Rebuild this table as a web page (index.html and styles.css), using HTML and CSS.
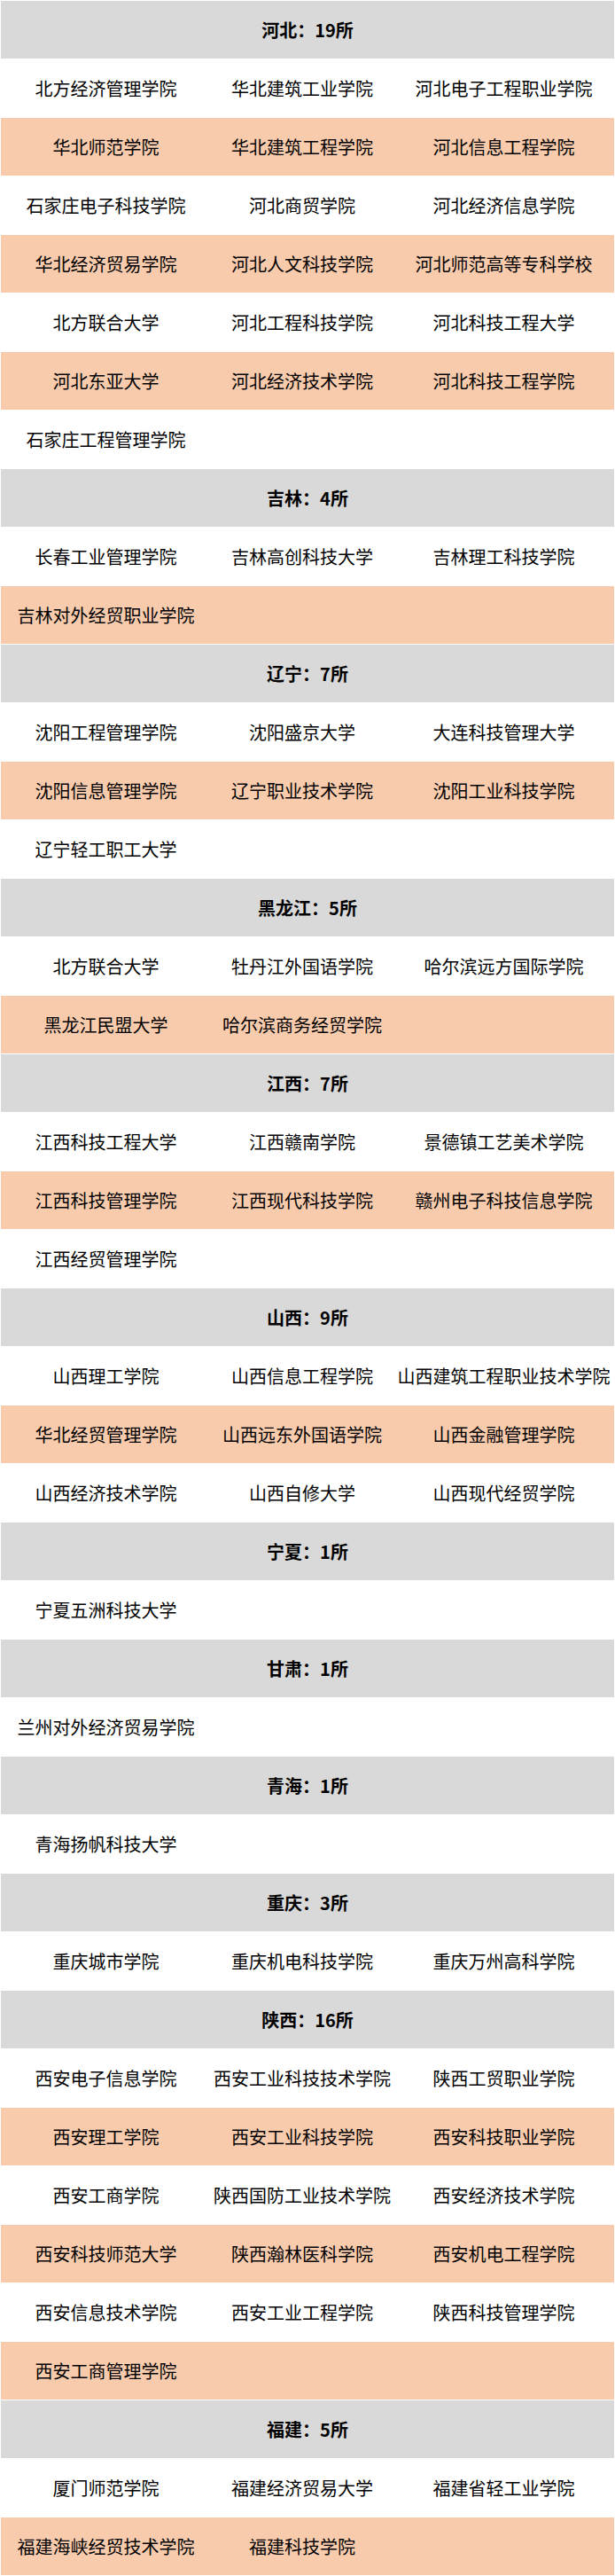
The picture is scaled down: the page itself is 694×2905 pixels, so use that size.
FILE: index.html
```html
<!DOCTYPE html>
<html lang="zh">
<head>
<meta charset="utf-8">
<title>院校名单</title>
<link rel="stylesheet" href="styles.css">
</head>
<body>
<div class="table">
  <div class="head">河北：19所</div>
  <div class="row"><div class="cell">北方经济管理学院</div><div class="cell">华北建筑工业学院</div><div class="cell">河北电子工程职业学院</div></div>
  <div class="row alt"><div class="cell">华北师范学院</div><div class="cell">华北建筑工程学院</div><div class="cell">河北信息工程学院</div></div>
  <div class="row"><div class="cell">石家庄电子科技学院</div><div class="cell">河北商贸学院</div><div class="cell">河北经济信息学院</div></div>
  <div class="row alt"><div class="cell">华北经济贸易学院</div><div class="cell">河北人文科技学院</div><div class="cell">河北师范高等专科学校</div></div>
  <div class="row"><div class="cell">北方联合大学</div><div class="cell">河北工程科技学院</div><div class="cell">河北科技工程大学</div></div>
  <div class="row alt"><div class="cell">河北东亚大学</div><div class="cell">河北经济技术学院</div><div class="cell">河北科技工程学院</div></div>
  <div class="row"><div class="cell">石家庄工程管理学院</div><div class="cell"></div><div class="cell"></div></div>

  <div class="head">吉林：4所</div>
  <div class="row"><div class="cell">长春工业管理学院</div><div class="cell">吉林高创科技大学</div><div class="cell">吉林理工科技学院</div></div>
  <div class="row alt"><div class="cell">吉林对外经贸职业学院</div><div class="cell"></div><div class="cell"></div></div>

  <div class="head">辽宁：7所</div>
  <div class="row"><div class="cell">沈阳工程管理学院</div><div class="cell">沈阳盛京大学</div><div class="cell">大连科技管理大学</div></div>
  <div class="row alt"><div class="cell">沈阳信息管理学院</div><div class="cell">辽宁职业技术学院</div><div class="cell">沈阳工业科技学院</div></div>
  <div class="row"><div class="cell">辽宁轻工职工大学</div><div class="cell"></div><div class="cell"></div></div>

  <div class="head">黑龙江：5所</div>
  <div class="row"><div class="cell">北方联合大学</div><div class="cell">牡丹江外国语学院</div><div class="cell">哈尔滨远方国际学院</div></div>
  <div class="row alt"><div class="cell">黑龙江民盟大学</div><div class="cell">哈尔滨商务经贸学院</div><div class="cell"></div></div>

  <div class="head">江西：7所</div>
  <div class="row"><div class="cell">江西科技工程大学</div><div class="cell">江西赣南学院</div><div class="cell">景德镇工艺美术学院</div></div>
  <div class="row alt"><div class="cell">江西科技管理学院</div><div class="cell">江西现代科技学院</div><div class="cell">赣州电子科技信息学院</div></div>
  <div class="row"><div class="cell">江西经贸管理学院</div><div class="cell"></div><div class="cell"></div></div>

  <div class="head">山西：9所</div>
  <div class="row"><div class="cell">山西理工学院</div><div class="cell">山西信息工程学院</div><div class="cell">山西建筑工程职业技术学院</div></div>
  <div class="row alt"><div class="cell">华北经贸管理学院</div><div class="cell">山西远东外国语学院</div><div class="cell">山西金融管理学院</div></div>
  <div class="row"><div class="cell">山西经济技术学院</div><div class="cell">山西自修大学</div><div class="cell">山西现代经贸学院</div></div>

  <div class="head">宁夏：1所</div>
  <div class="row"><div class="cell">宁夏五洲科技大学</div><div class="cell"></div><div class="cell"></div></div>

  <div class="head">甘肃：1所</div>
  <div class="row"><div class="cell">兰州对外经济贸易学院</div><div class="cell"></div><div class="cell"></div></div>

  <div class="head">青海：1所</div>
  <div class="row"><div class="cell">青海扬帆科技大学</div><div class="cell"></div><div class="cell"></div></div>

  <div class="head">重庆：3所</div>
  <div class="row"><div class="cell">重庆城市学院</div><div class="cell">重庆机电科技学院</div><div class="cell">重庆万州高科学院</div></div>

  <div class="head">陕西：16所</div>
  <div class="row"><div class="cell">西安电子信息学院</div><div class="cell">西安工业科技技术学院</div><div class="cell">陕西工贸职业学院</div></div>
  <div class="row alt"><div class="cell">西安理工学院</div><div class="cell">西安工业科技学院</div><div class="cell">西安科技职业学院</div></div>
  <div class="row"><div class="cell">西安工商学院</div><div class="cell">陕西国防工业技术学院</div><div class="cell">西安经济技术学院</div></div>
  <div class="row alt"><div class="cell">西安科技师范大学</div><div class="cell">陕西瀚林医科学院</div><div class="cell">西安机电工程学院</div></div>
  <div class="row"><div class="cell">西安信息技术学院</div><div class="cell">西安工业工程学院</div><div class="cell">陕西科技管理学院</div></div>
  <div class="row alt"><div class="cell">西安工商管理学院</div><div class="cell"></div><div class="cell"></div></div>

  <div class="head">福建：5所</div>
  <div class="row"><div class="cell">厦门师范学院</div><div class="cell">福建经济贸易大学</div><div class="cell">福建省轻工业学院</div></div>
  <div class="row alt"><div class="cell">福建海峡经贸技术学院</div><div class="cell">福建科技学院</div><div class="cell"></div></div>
</div>
</body>
</html>
```

FILE: styles.css
```css
html, body {
  margin: 0;
  padding: 0;
  background: #ffffff;
}

body {
  font-family: "Noto Sans CJK SC", "Noto Sans", sans-serif;
  color: #000000;
  font-size: 20px;
}

.table {
  width: 692px;
  padding: 1px;
  display: flex;
  flex-direction: column;
  gap: 1px;
  background: #ffffff;
}

.head {
  height: 65px;
  background: #d9d9d9;
  display: flex;
  align-items: center;
  justify-content: center;
  font-weight: bold;
  line-height: 1;
}

.row {
  height: 65px;
  display: grid;
  grid-template-columns: 237px 206px 249px;
  align-items: center;
  background: #ffffff;
  line-height: 1;
}

.row.alt {
  background: #f8cbad;
}

.cell {
  text-align: center;
  white-space: nowrap;
}
```
